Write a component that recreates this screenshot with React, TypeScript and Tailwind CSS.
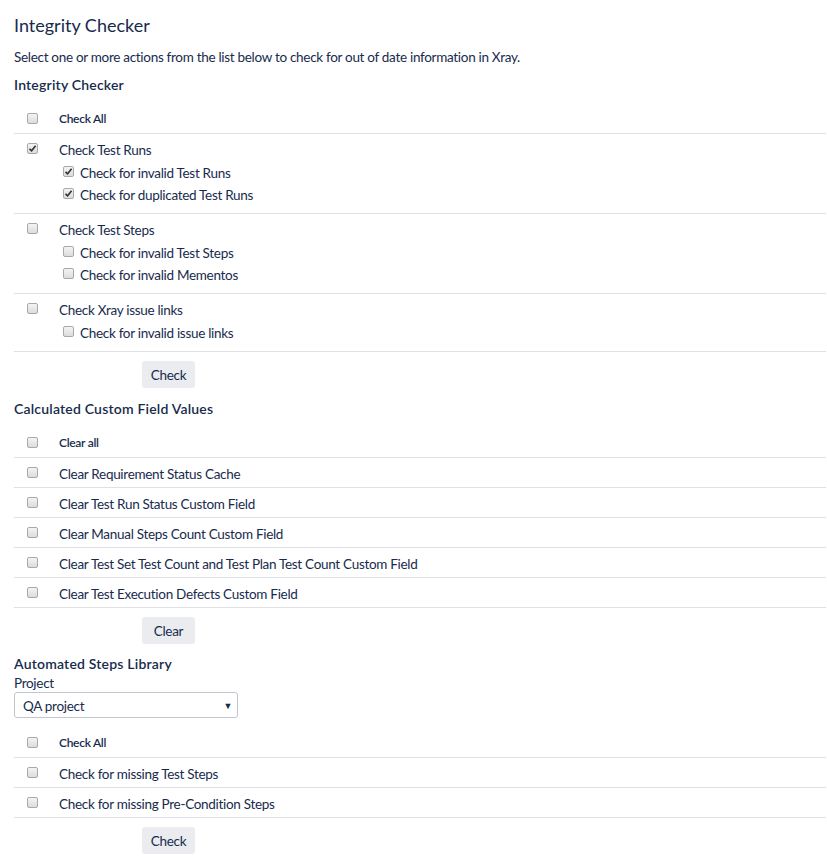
import React from "react";

const Box = ({ checked }: { checked?: boolean }) => (
  <span className="inline-flex h-[11px] w-[11px] items-center justify-center rounded-[2px] border border-[#a9a9a9] bg-gradient-to-b from-[#f4f4f4] to-[#dcdcdc]">
    {checked && (
      <svg width="9" height="9" viewBox="0 0 9 9">
        <path d="M1.5 4.8 L3.6 6.8 L7.6 1.8" fill="none" stroke="#333" strokeWidth="1.6" />
      </svg>
    )}
  </span>
);

const HeadRow = ({ label }: { label: string }) => (
  <div className="flex h-[30px] items-center border-b border-[#dfe1e6] pt-[1px]">
    <div className="flex w-[45px] pb-[2px] pl-[13px]">
      <Box />
    </div>
    <span className="text-[12px] font-semibold tracking-[-0.3px] text-[#172b4d]">{label}</span>
  </div>
);

const Row = ({ label }: { label: string }) => (
  <div className="flex h-[30px] items-center border-b border-[#dfe1e6] pt-[2px]">
    <div className="flex w-[45px] pb-[3px] pl-[13px]">
      <Box />
    </div>
    <span>{label}</span>
  </div>
);

const Group = ({ label, checked, subs }: { label: string; checked?: boolean; subs: string[] }) => (
  <div className="flex flex-col border-b border-[#dfe1e6] pb-[7px] pt-[6px]">
    <div className="flex h-[20px] items-center">
      <div className="flex w-[45px] pb-[3px] pl-[13px]">
        <Box checked={checked} />
      </div>
      <span>{label}</span>
    </div>
    <div className="mt-[2px] flex flex-col">
      {subs.map((s) => (
        <div key={s} className="flex h-[22px] items-center pl-[49px]">
          <div className="mr-[6px] flex pb-[3px]">
            <Box checked={checked} />
          </div>
          <span>{s}</span>
        </div>
      ))}
    </div>
  </div>
);

const Btn = ({ label }: { label: string }) => (
  <div className="mt-[9px] flex pl-[128px]">
    <div className="flex h-[27px] w-[53px] items-center justify-center rounded-[3px] bg-[#ebecf0] pt-[1px] text-[#172b4d]">
      {label}
    </div>
  </div>
);

export default function App() {
  return (
    <div
      className="flex min-h-[868px] w-[827px] flex-col bg-white pl-[14px] pr-[1px] text-[13.5px] leading-[20px] tracking-[-0.3px] text-[#172b4d]"
      style={{ fontFamily: "Lato, 'Noto Sans', sans-serif" }}
    >
      <div className="mt-[10px] h-[30px] text-[18px] leading-[30px] tracking-normal">Integrity Checker</div>
      <div className="mt-[6px] h-[20px] pt-[1px]">
        Select one or more actions from the list below to check for out of date information in Xray.
      </div>
      <div className="mt-[8px] h-[20px] pt-[1px] text-[14px] font-semibold tracking-[0.2px]">Integrity Checker</div>
      <div className="mt-[10px] flex flex-col">
        <HeadRow label="Check All" />
        <Group label="Check Test Runs" checked subs={["Check for invalid Test Runs", "Check for duplicated Test Runs"]} />
        <Group label="Check Test Steps" subs={["Check for invalid Test Steps", "Check for invalid Mementos"]} />
        <Group label="Check Xray issue links" subs={["Check for invalid issue links"]} />
      </div>
      <Btn label="Check" />
      <div className="mt-[10px] h-[20px] pt-[1px] text-[14px] font-semibold tracking-[0.2px]">Calculated Custom Field Values</div>
      <div className="mt-[10px] flex flex-col">
        <HeadRow label="Clear all" />
        <Row label="Clear Requirement Status Cache" />
        <Row label="Clear Test Run Status Custom Field" />
        <Row label="Clear Manual Steps Count Custom Field" />
        <Row label="Clear Test Set Test Count and Test Plan Test Count Custom Field" />
        <Row label="Clear Test Execution Defects Custom Field" />
      </div>
      <Btn label="Clear" />
      <div className="mt-[9px] h-[20px] pt-[1px] text-[14px] font-semibold tracking-[0.2px]">Automated Steps Library</div>
      <div className="h-[19px] pt-[1px] leading-[18px]">Project</div>
      <div className="flex h-[26px] w-[224px] items-center justify-between rounded-[3px] border border-[#c1c7d0] pl-[8px] pr-[5px] pt-[2px]">
        <span>QA project</span>
        <span className="pb-[2px] text-[9px] leading-none text-[#172b4d]">▼</span>
      </div>
      <div className="mt-[10px] flex flex-col">
        <HeadRow label="Check All" />
        <Row label="Check for missing Test Steps" />
        <Row label="Check for missing Pre-Condition Steps" />
      </div>
      <Btn label="Check" />
    </div>
  );
}
